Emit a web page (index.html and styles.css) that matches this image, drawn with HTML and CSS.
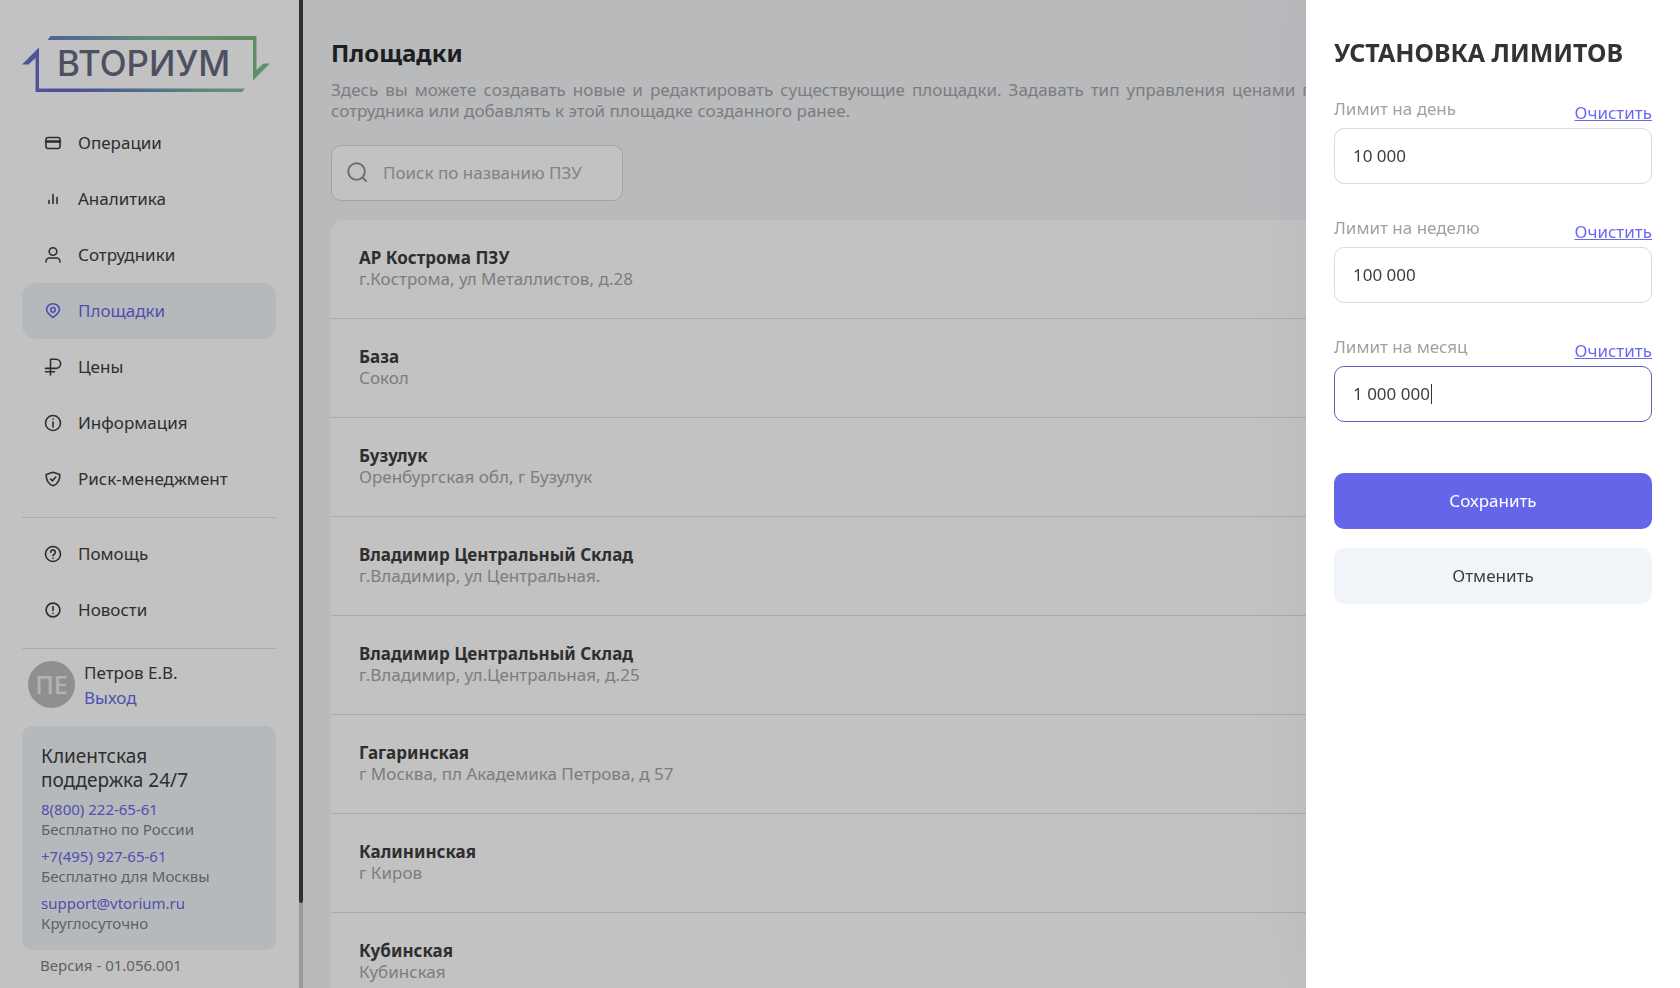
FILE: index.html
```html
<!DOCTYPE html>
<html lang="ru">
<head>
<meta charset="utf-8">
<meta name="viewport" content="width=device-width, initial-scale=1">
<title>Площадки</title>
<link rel="stylesheet" href="styles.css">
</head>
<body>
<div class="app">
  <aside class="sidebar">
    <div class="sidebar-content">
      <svg class="logo" viewBox="0 0 248 56" role="img" aria-label="ВТОРИУМ">
        <defs>
          <linearGradient id="logo-top" x1="0" y1="0" x2="1" y2="0">
            <stop offset="0" stop-color="#6a7fc9"/><stop offset=".5" stop-color="#7dbf9b"/><stop offset=".9" stop-color="#7eb87c"/><stop offset="1" stop-color="#7dbf9b"/>
          </linearGradient>
          <linearGradient id="logo-bottom" x1="0" y1="0" x2="1" y2="0">
            <stop offset="0" stop-color="#6a6fca"/><stop offset=".25" stop-color="#686ac9"/><stop offset=".65" stop-color="#6d9fae"/><stop offset=".9" stop-color="#7dbf9b"/>
          </linearGradient>
        </defs>
        <path fill="url(#logo-top)" d="M25.500 4 28.500 0H234.500V34L241.500 27.500H248L231 44.500V4Z"/>
        <path fill="url(#logo-bottom)" d="M0 28.500 17 11.500V52.500H223L220 56H13.500V22L6.500 28.500Z"/>
        <text class="logo-text" x="35" y="40">ВТОРИУМ</text>
      </svg>
      <nav class="nav">
        <a class="nav-item" href="#"><svg class="icon" viewBox="0 0 18 18"><rect x="2" y="3.500" width="14" height="11" rx="2"/><path d="M2 7.500h14" stroke-width="2.500"/></svg>Операции</a>
        <a class="nav-item" href="#"><svg class="icon" viewBox="0 0 18 18"><path d="M5 10.500V13.500M9 4.500v9M13 7.500v6"/></svg>Аналитика</a>
        <a class="nav-item" href="#"><svg class="icon" viewBox="0 0 18 18"><circle cx="9" cy="5.500" r="3.800"/><path d="M2 16v-.5a3.500 3.500 0 0 1 3.500-3.500h7a3.500 3.500 0 0 1 3.500 3.500v.5"/></svg>Сотрудники</a>
        <a class="nav-item active" href="#" aria-current="page"><svg class="icon" viewBox="0 0 18 18"><path d="M9 15.500C5 12.500 2.600 10.500 2.600 7.700a6.400 6 0 0 1 12.800 0C15.400 10.500 13 12.500 9 15.500Z"/><circle cx="9" cy="7.800" r="2.300"/></svg>Площадки</a>
        <a class="nav-item" href="#"><svg class="icon" viewBox="0 0 18 18"><path d="M6.500 17V1.200h5.500a4.500 4.500 0 0 1 0 9.200H1.500M1.500 13.700h9"/></svg>Цены</a>
        <a class="nav-item" href="#"><svg class="icon" viewBox="0 0 18 18"><circle cx="9" cy="9" r="7.500"/><path d="M9 8v5M9 5v.3"/></svg>Информация</a>
        <a class="nav-item" href="#"><svg class="icon" viewBox="0 0 18 18"><path d="M9 2.200 15.800 4.400C16 10.500 14 14 9 15.800 4 14 2 10.500 2.200 4.400Z"/><path d="m6.500 9 2 1.800 3.300-3.800"/></svg>Риск-менеджмент</a>
      </nav>
      <hr class="divider">
      <nav class="nav">
        <a class="nav-item" href="#"><svg class="icon" viewBox="0 0 18 18"><circle cx="9" cy="9" r="7.500"/><path d="M6.700 7.200a2.300 2.300 0 1 1 3.500 2C9.300 9.700 9 10 9 10.800M9 13v.3"/></svg>Помощь</a>
        <a class="nav-item" href="#"><svg class="icon" viewBox="0 0 18 18"><circle cx="9" cy="9" r="6.900"/><path d="M9 5.500v4M9 12.200v.3"/></svg>Новости</a>
      </nav>
      <hr class="divider">
      <div class="user">
        <span class="avatar">ПЕ</span>
        <div class="user-info"><span>Петров Е.В.</span><a class="link" href="#">Выход</a></div>
      </div>
      <section class="support">
        <h2 class="support-title">Клиентская поддержка 24/7</h2>
        <p class="contact"><a class="link" href="#">8(800) 222-65-61</a><span>Бесплатно по России</span></p>
        <p class="contact"><a class="link" href="#">+7(495) 927-65-61</a><span>Бесплатно для Москвы</span></p>
        <p class="contact"><a class="link" href="#">support@vtorium.ru</a><span>Круглосуточно</span></p>
      </section>
      <p class="version">Версия - 01.056.001</p>
    </div>
    <div class="scroll-track"><div class="scroll-thumb"></div></div>
  </aside>

  <main class="main">
    <h1 class="title">Площадки</h1>
    <p class="intro">Здесь вы можете создавать новые и редактировать существующие площадки. Задавать тип управления ценами площадки или назначать ответственного сотрудника или добавлять к этой площадке созданного ранее.</p>
    <label class="search">
      <svg class="search-icon" viewBox="0 0 22 22"><circle cx="10" cy="10" r="8.700"/><path d="m16.500 16.500 4 4"/></svg>
      <input class="search-input" type="text" placeholder="Поиск по названию ПЗУ" aria-label="Поиск по названию ПЗУ">
    </label>
    <ul class="list">
      <li class="row"><strong>АР Кострома ПЗУ</strong><span>г.Кострома, ул Металлистов, д.28</span></li>
      <li class="row"><strong>База</strong><span>Сокол</span></li>
      <li class="row"><strong>Бузулук</strong><span>Оренбургская обл, г Бузулук</span></li>
      <li class="row"><strong>Владимир Центральный Склад</strong><span>г.Владимир, ул Центральная.</span></li>
      <li class="row"><strong>Владимир Центральный Склад</strong><span>г.Владимир, ул.Центральная, д.25</span></li>
      <li class="row"><strong>Гагаринская</strong><span>г Москва, пл Академика Петрова, д 57</span></li>
      <li class="row"><strong>Калининская</strong><span>г Киров</span></li>
      <li class="row"><strong>Кубинская</strong><span>Кубинская</span></li>
    </ul>
  </main>
</div>

<div class="backdrop"></div>

<form class="drawer">
  <h2 class="drawer-title">УСТАНОВКА ЛИМИТОВ</h2>
  <div class="field">
    <div class="field-head"><label for="day">Лимит на день</label><a class="clear" href="#">Очистить</a></div>
    <input class="input" id="day" type="text" value="10 000">
  </div>
  <div class="field">
    <div class="field-head"><label for="week">Лимит на неделю</label><a class="clear" href="#">Очистить</a></div>
    <input class="input" id="week" type="text" value="100 000">
  </div>
  <div class="field">
    <div class="field-head"><label for="month">Лимит на месяц</label><a class="clear" href="#">Очистить</a></div>
    <div class="input-wrap">
      <input class="input focused" id="month" type="text" value="1 000 000">
      <span class="caret"></span>
    </div>
  </div>
  <div class="actions">
    <button class="button primary" type="submit">Сохранить</button>
    <button class="button" type="button">Отменить</button>
  </div>
</form>
</body>
</html>
```

FILE: styles.css
```css
* { box-sizing: border-box; }

body {
  margin: 0;
  overflow: hidden;
  background: #f4f5f7;
  color: #3d3d3d;
  font: 17px/21px "Noto Sans", "Open Sans", sans-serif;
}

h1, h2, p, ul { margin: 0; padding: 0; }
a { color: inherit; text-decoration: none; }
input, button { font: inherit; color: inherit; }

.app { display: flex; height: 100vh; overflow: hidden; }

/* Sidebar */
.sidebar { display: flex; flex: none; width: 303px; background: #fff; }
.sidebar-content { flex: 1; padding: 36px 23px 0 22px; }
.scroll-track { display: flex; flex-direction: column; width: 4px; padding-bottom: 85px; background: #cbcbcb; }
.scroll-thumb { flex: 1; background: #404040; border-radius: 0 0 2px 2px; }

.logo { display: block; width: 248px; height: 56px; margin-bottom: 23px; }
.logo-text { font: 500 35px Inter, sans-serif; fill: #666a80; }

.nav-item {
  display: flex;
  align-items: center;
  gap: 16px;
  height: 56px;
  padding: 0 22px 1px;
  border-radius: 14px;
}
.nav-item.active { background: #eff4f8; color: #6a69e6; }

.icon {
  flex: none;
  width: 18px;
  height: 18px;
  fill: none;
  stroke: currentColor;
  stroke-width: 1.6;
  stroke-linecap: round;
  stroke-linejoin: round;
}

.divider { height: 1px; margin: 10px 0 8px; border: 0; background: #e2e2e4; }

.user { display: flex; align-items: center; gap: 9px; padding: 4px 6px 18px; }
.avatar {
  display: grid;
  place-items: center;
  width: 47px;
  height: 47px;
  border-radius: 50%;
  background: #bdbdbd;
  color: #ececec;
  font-size: 25px;
  font-weight: 500;
}
.user-info { display: grid; gap: 4px; }
.link { color: #6a69e6; }

.support {
  padding: 18px 19px 17px;
  border-radius: 10px;
  background: #eff4f8;
  color: #7e7f84;
  font-size: 15px;
  line-height: 20px;
}
.support-title {
  max-width: 180px;
  color: #3d3d3d;
  font-size: 19px;
  font-weight: 400;
  line-height: 24px;
}
.contact { display: grid; margin-top: 7px; }
.version { padding: 5px 18px; color: #7e7f84; font-size: 15px; line-height: 20px; }

/* Sites */
.main { flex: 1; min-width: 0; padding: 37px 28px 0; }
.title { color: #25282b; font-size: 24px; line-height: 32px; }
.intro { margin: 10px 0 24px; color: #a3a5a9; text-align: justify; }

.search {
  display: flex;
  align-items: center;
  gap: 15px;
  width: 292px;
  height: 56px;
  padding: 0 15px 2px;
  border: 1px solid #d6d6de;
  border-radius: 10px;
  background: #fff;
}
.search-icon { flex: none; width: 21px; height: 21px; fill: none; stroke: #8c8d93; stroke-width: 2; }
.search-input { flex: 1; min-width: 0; padding: 0; border: 0; outline: 0; background: none; }
.search-input::placeholder { color: #aaabaf; opacity: 1; }

.list { margin-top: 19px; border-radius: 12px; background: #fff; list-style: none; }
.row { display: grid; padding: 27px 28px 29px; border-bottom: 1px solid #dddee1; color: #a3a5a9; }
.row strong { color: #3d3d3d; }

/* Limits drawer */
.backdrop { position: fixed; inset: 0; background: rgba(0, 0, 0, 0.24); }

.drawer {
  position: fixed;
  inset: 0 0 0 auto;
  width: 374px;
  padding: 36px 28px;
  background: #fff;
  box-shadow: 0 0 60px rgba(120, 130, 160, 0.16);
}
.drawer-title { margin-bottom: 30px; color: #333; font-size: 25px; line-height: 32px; white-space: nowrap; }
.field { margin-bottom: 33px; }
.field-head { display: flex; justify-content: space-between; height: 30px; padding-bottom: 5px; color: #9fa1a7; }
.clear { align-self: flex-end; color: #6a69ee; text-decoration: underline; }
.input {
  display: block;
  width: 100%;
  height: 56px;
  padding: 0 18px 1px;
  border: 1px solid #d8d9e0;
  border-radius: 10px;
  outline: 0;
  background: #fff;
}
.input.focused { border-color: #5f5fbf; }
.input-wrap { position: relative; }
.caret { position: absolute; top: 18px; left: 97px; width: 1px; height: 20px; background: #333; }

.actions { display: grid; gap: 19px; margin-top: 51px; }
.button { height: 56px; padding: 0 0 1px; border: 0; border-radius: 10px; background: #f1f5fa; }
.button.primary { background: #6366e8; color: #fff; }
```
